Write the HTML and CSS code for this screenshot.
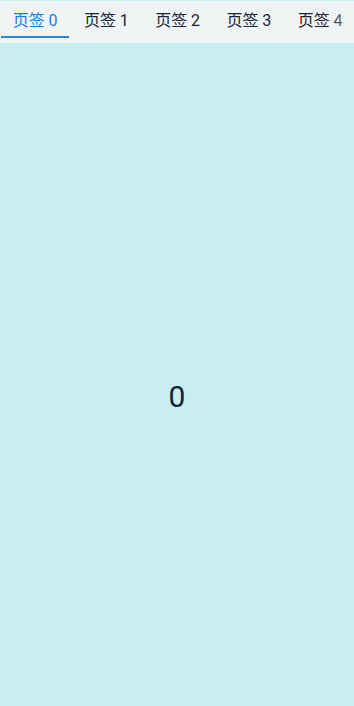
FILE: index.html
```html
<!DOCTYPE html>
<html lang="zh">
<head>
<meta charset="utf-8">
<link rel="stylesheet" href="styles.css">
</head>
<body>
<div class="page">
  <div class="tabbar">
    <div class="tab active"><span class="label">页签 0</span></div>
    <div class="tab"><span class="label">页签 1</span></div>
    <div class="tab"><span class="label">页签 2</span></div>
    <div class="tab"><span class="label">页签 3</span></div>
    <div class="tab"><span class="label">页签 4</span></div>
    <div class="fade"></div>
  </div>
  <div class="content">0</div>
</div>
</body>
</html>
```
FILE: styles.css
```css
html, body {
  margin: 0;
  padding: 0;
  height: 100%;
  overflow: hidden;
}
body {
  font-family: Roboto, "Noto Sans CJK SC", sans-serif;
  background: #c8eef1;
  color: #182431;
}
.page {
  display: flex;
  flex-direction: column;
  height: 100vh;
  box-sizing: border-box;
  border-top: 1px solid #c8eef1;
}
.tabbar {
  position: relative;
  display: flex;
  flex: 0 0 42px;
  background: #f1f4f5;
  overflow: hidden;
}
.tab {
  flex: 0 0 71.25px;
  display: flex;
  justify-content: center;
  align-items: flex-start;
  padding-top: 9px;
  padding-right: 1px;
  box-sizing: border-box;
  font-size: 16px;
  line-height: 22px;
  color: #182431;
  position: relative;
}
.tab.active {
  color: #1a7ee6;
}
.tab.active::after {
  content: "";
  position: absolute;
  left: 1px;
  right: 2px;
  top: 35px;
  height: 2px;
  background: #2a85e2;
}
.fade {
  position: absolute;
  right: 0;
  top: 0;
  bottom: 0;
  width: 24px;
  background: linear-gradient(to right, rgba(241,244,245,0), rgba(241,244,245,0.75));
}
.content {
  flex: 1;
  display: flex;
  align-items: center;
  justify-content: center;
  padding-top: 43px;
  font-size: 30px;
  color: #182431;
}
```
